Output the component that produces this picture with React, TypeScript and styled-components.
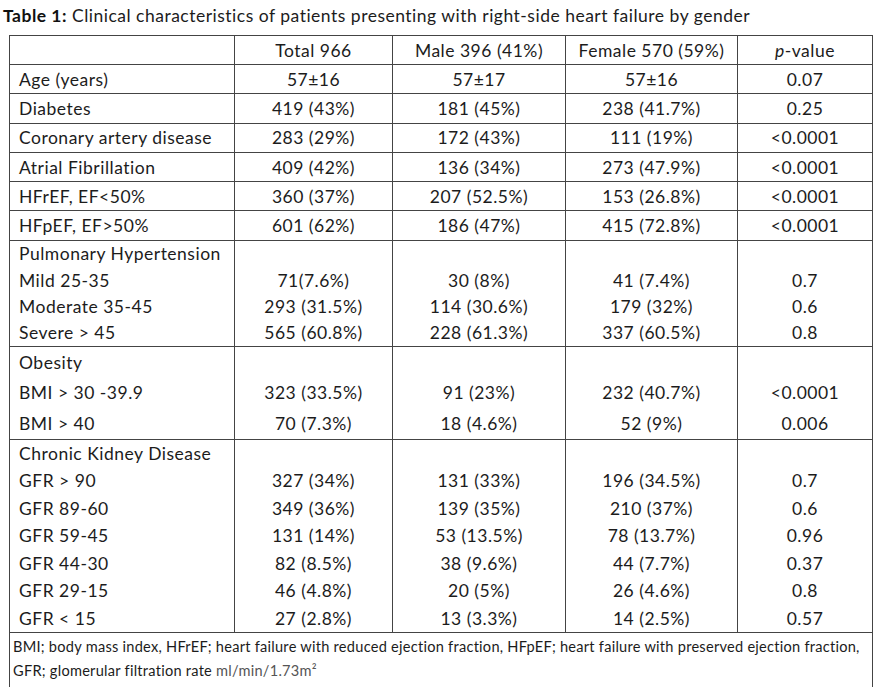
import React from "react";
import styled, { createGlobalStyle } from "styled-components";

const Global = createGlobalStyle`
  html, body { margin: 0; padding: 0; background: #fff; }
  body { font-family: Lato, "Noto Sans", "Liberation Sans", sans-serif; color: #1c1c1c; }
`;

const Page = styled.div`
  padding: 4px 0 0 3px;
  width: 875px;
  box-sizing: border-box;
`;

const Caption = styled.div`
  font-size: 17.5px;
  letter-spacing: 0.5px;
  line-height: 24px;
  height: 31px;
  white-space: nowrap;
`;

const CaptionLabel = styled.span`
  font-weight: 700;
  color: #111;
`;

const Table = styled.table`
  margin-left: 6px;
  border-collapse: collapse;
  table-layout: fixed;
  width: 863px;
  font-size: 17.5px;
  letter-spacing: 0.5px;
  border: 1px solid #444;
`;

const Group = styled.tbody`
  border-top: 1px solid #444;
`;

const Row = styled.tr<{ $h: number }>`
  height: ${(p) => p.$h}px;
`;

const HeadCell = styled.th`
  font-weight: 400;
  text-align: center;
  padding: 0;
  border-left: 1px solid #444;
  white-space: nowrap;
`;

const Label = styled.td`
  padding: 0 0 0 9px;
  text-align: left;
  white-space: nowrap;
  border-left: 1px solid #444;
`;

const Cell = styled.td`
  padding: 0;
  text-align: center;
  white-space: nowrap;
  border-left: 1px solid #444;
`;

const FootCell = styled.td`
  padding: 2px 0 4px 3px;
  font-size: 14.6px;
  letter-spacing: 0.25px;
  line-height: 24px;
  text-align: left;
  white-space: nowrap;
`;

const Unit = styled.span`
  color: #555;
`;

type R = [string, string, string, string, string];

const simple: R[] = [
  ["Age (years)", "57±16", "57±17", "57±16", "0.07"],
  ["Diabetes", "419 (43%)", "181 (45%)", "238 (41.7%)", "0.25"],
  ["Coronary artery disease", "283 (29%)", "172 (43%)", "111 (19%)", "<0.0001"],
  ["Atrial Fibrillation", "409 (42%)", "136 (34%)", "273 (47.9%)", "<0.0001"],
  ["HFrEF, EF<50%", "360 (37%)", "207 (52.5%)", "153 (26.8%)", "<0.0001"],
  ["HFpEF, EF>50%", "601 (62%)", "186 (47%)", "415 (72.8%)", "<0.0001"],
];

const groups: { title: string; h: number; rows: R[] }[] = [
  {
    title: "Pulmonary Hypertension",
    h: 26.5,
    rows: [
      ["Mild 25-35", "71(7.6%)", "30 (8%)", "41 (7.4%)", "0.7"],
      ["Moderate 35-45", "293 (31.5%)", "114 (30.6%)", "179 (32%)", "0.6"],
      ["Severe > 45", "565 (60.8%)", "228 (61.3%)", "337 (60.5%)", "0.8"],
    ],
  },
  {
    title: "Obesity",
    h: 31,
    rows: [
      ["BMI > 30 -39.9", "323 (33.5%)", "91 (23%)", "232 (40.7%)", "<0.0001"],
      ["BMI > 40", "70 (7.3%)", "18 (4.6%)", "52 (9%)", "0.006"],
    ],
  },
  {
    title: "Chronic Kidney Disease",
    h: 27.57,
    rows: [
      ["GFR > 90", "327 (34%)", "131 (33%)", "196 (34.5%)", "0.7"],
      ["GFR 89-60", "349 (36%)", "139 (35%)", "210 (37%)", "0.6"],
      ["GFR 59-45", "131 (14%)", "53 (13.5%)", "78 (13.7%)", "0.96"],
      ["GFR 44-30", "82 (8.5%)", "38 (9.6%)", "44 (7.7%)", "0.37"],
      ["GFR 29-15", "46 (4.8%)", "20 (5%)", "26 (4.6%)", "0.8"],
      ["GFR < 15", "27 (2.8%)", "13 (3.3%)", "14 (2.5%)", "0.57"],
    ],
  },
];

const DataRow = ({ r, h }: { r: R; h: number }) => (
  <Row $h={h}>
    <Label>{r[0]}</Label>
    <Cell>{r[1]}</Cell>
    <Cell>{r[2]}</Cell>
    <Cell>{r[3]}</Cell>
    <Cell>{r[4]}</Cell>
  </Row>
);

export default function App() {
  return (
    <Page>
      <Global />
      <Caption>
        <CaptionLabel>Table 1:</CaptionLabel> Clinical characteristics of patients presenting with right-side heart
        failure by gender
      </Caption>
      <Table>
        <colgroup>
          <col style={{ width: 225 }} />
          <col style={{ width: 158 }} />
          <col style={{ width: 173 }} />
          <col style={{ width: 172 }} />
          <col style={{ width: 135 }} />
        </colgroup>
        <Group>
          <Row $h={29}>
            <HeadCell />
            <HeadCell>Total 966</HeadCell>
            <HeadCell>Male 396 (41%)</HeadCell>
            <HeadCell>Female 570 (59%)</HeadCell>
            <HeadCell>
              <i>p</i>-value
            </HeadCell>
          </Row>
        </Group>
        {simple.map((r) => (
          <Group key={r[0]}>
            <DataRow r={r} h={29.3} />
          </Group>
        ))}
        {groups.map((g) => (
          <Group key={g.title}>
            <DataRow r={[g.title, "", "", "", ""]} h={g.h} />
            {g.rows.map((r) => (
              <DataRow key={r[0]} r={r} h={g.h} />
            ))}
          </Group>
        ))}
        <Group>
          <tr>
            <FootCell colSpan={5}>
              BMI; body mass index, HFrEF; heart failure with reduced ejection fraction, HFpEF; heart failure with
              preserved ejection fraction,
              <br />
              GFR; glomerular filtration rate <Unit>ml/min/1.73m²</Unit>
            </FootCell>
          </tr>
        </Group>
      </Table>
    </Page>
  );
}
